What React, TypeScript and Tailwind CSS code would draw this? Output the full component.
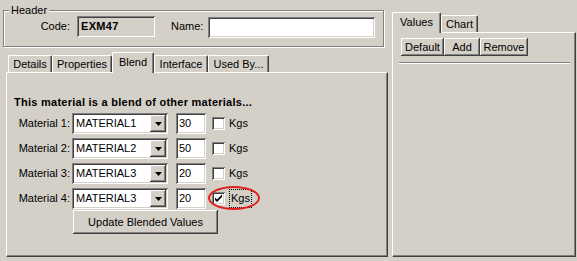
const raised =
  "bg-[#d4d0c8] shadow-[inset_-1px_-1px_#404040,inset_1px_1px_#ffffff,inset_-2px_-2px_#808080,inset_2px_2px_#d4d0c8]";
const sunken =
  "shadow-[inset_1px_1px_#808080,inset_-1px_-1px_#ffffff,inset_2px_2px_#404040,inset_-2px_-2px_#d4d0c8]";

const Tab = ({ label, width, active }: { label: string; width: string; active?: boolean }) => (
  <div
    className={`${width} ${
      active ? "h-[21px] -mb-px relative z-10 pt-[2px]" : "h-[17px] pt-[1px]"
    } bg-[#d4d0c8] border-t border-l border-white border-r border-r-[#404040] rounded-t-[2px] shadow-[inset_-1px_0_#808080] flex justify-center items-start leading-[14px]`}
  >
    {label}
  </div>
);

const ComboRow = ({
  label,
  value,
  qty,
  checked,
}: {
  label: string;
  value: string;
  qty: string;
  checked?: boolean;
}) => (
  <div className="flex items-center h-[21px]">
    <div className="w-[56px] text-right">{label}</div>
    <div className={`ml-[2px] w-[96px] h-[21px] bg-white ${sunken} flex items-center relative`}>
      <span className="pl-[4px]">{value}</span>
      <div className={`absolute right-[2px] top-[2px] w-[16px] h-[17px] ${raised} flex items-center justify-center`}>
        <svg width="7" height="4" viewBox="0 0 7 4">
          <path d="M0 0h7L3.5 4z" fill="#000" />
        </svg>
      </div>
    </div>
    <div className={`ml-[8px] w-[30px] h-[21px] bg-white ${sunken} flex items-center pl-[3px]`}>{qty}</div>
    <div className={`ml-[6px] w-[13px] h-[13px] bg-white ${sunken} flex items-center justify-center`}>
      {checked && (
        <svg width="9" height="9" viewBox="0 0 9 9">
          <path d="M1 3.5l2 2 5-5v2.5L3 8 1 6z" fill="#000" />
        </svg>
      )}
    </div>
    <span className={`ml-[4px] ${checked ? "border border-dotted border-black px-px -ml-[0px]" : ""}`}>Kgs</span>
  </div>
);

const Button = ({ label, width, height }: { label: string; width: string; height: string }) => (
  <div className={`${width} ${height} ${raised} flex items-center justify-center`}>{label}</div>
);

export default function App() {
  return (
    <div className="w-[577px] h-[261px] bg-[#d4d0c8] flex relative overflow-hidden text-[11px] text-black font-['Liberation_Sans',Arial,sans-serif]">
      {/* left column */}
      <div className="ml-[3px] w-[385px] flex flex-col">
        <div className="mt-[10px] w-[381px] h-[37px] border border-[#808080] shadow-[inset_1px_1px_#ffffff,1px_1px_#ffffff] relative flex items-start pt-[5px]">
          <span className="absolute -top-[8px] left-[5px] px-[2px] bg-[#d4d0c8] leading-[14px]">Header</span>
          <div className="w-[66px] text-right leading-[21px]">Code:</div>
          <div className={`ml-[7px] w-[78px] h-[21px] ${sunken} flex items-center pl-[4px] font-bold tracking-[0.3px]`}>EXM47</div>
          <div className="ml-[16px] w-[37px] leading-[21px]">Name:</div>
          <div className={`mt-[1px] w-[167px] h-[21px] bg-white ${sunken}`} />
        </div>

        <div className="ml-[3px] mt-[4px] w-[382px] flex flex-col">
          <div className="flex items-end h-[21px] pl-[2px]">
            <Tab label="Details" width="w-[44px]" />
            <Tab label="Properties" width="w-[60px]" />
            <Tab label="Blend" width="w-[42px]" active />
            <Tab label="Interface" width="w-[54px]" />
            <Tab label="Used By..." width="w-[61px]" />
          </div>
          <div className="h-[185px] border border-t-white border-l-white border-r-[#404040] border-b-[#404040] shadow-[inset_-1px_-1px_#808080] pl-[7px] pt-[22px]">
            <div className="font-bold leading-[14px] tracking-[0.26px]">This material is a blend of other materials...</div>
            <div className="mt-[4px] flex flex-col gap-[4px]">
              <ComboRow label="Material 1:" value="MATERIAL1" qty="30" />
              <ComboRow label="Material 2:" value="MATERIAL2" qty="50" />
              <ComboRow label="Material 3:" value="MATERIAL3" qty="20" />
              <ComboRow label="Material 4:" value="MATERIAL3" qty="20" checked />
            </div>
            <div className="mt-[1px] ml-[59px]">
              <Button label="Update Blended Values" width="w-[145px]" height="h-[24px]" />
            </div>
          </div>
        </div>
      </div>

      {/* right column */}
      <div className="ml-[4px] w-[184px] flex flex-col">
        <div className="mt-[10px] flex items-end h-[22px]">
          <Tab label="Values" width="w-[49px]" active />
          <Tab label="Chart" width="w-[37px]" />
        </div>
        <div className="h-[225px] border border-t-white border-l-white border-r-[#404040] border-b-[#404040] shadow-[inset_-1px_-1px_#808080]">
          <div className="ml-[8px] mt-[5px] flex">
            <Button label="Default" width="w-[43px]" height="h-[18px]" />
            <Button label="Add" width="w-[36px]" height="h-[18px]" />
            <Button label="Remove" width="w-[48px]" height="h-[18px]" />
          </div>
          <div className="ml-[6px] mt-[6px] w-[171px] h-[2px] border-t border-[#808080] border-b border-b-white" />
        </div>
      </div>

      {/* red annotation ellipse */}
      <div className="absolute left-[208px] top-[186px] w-[52px] h-[24px] border-2 border-[#e0201c] rounded-[50%]" />
    </div>
  );
}
